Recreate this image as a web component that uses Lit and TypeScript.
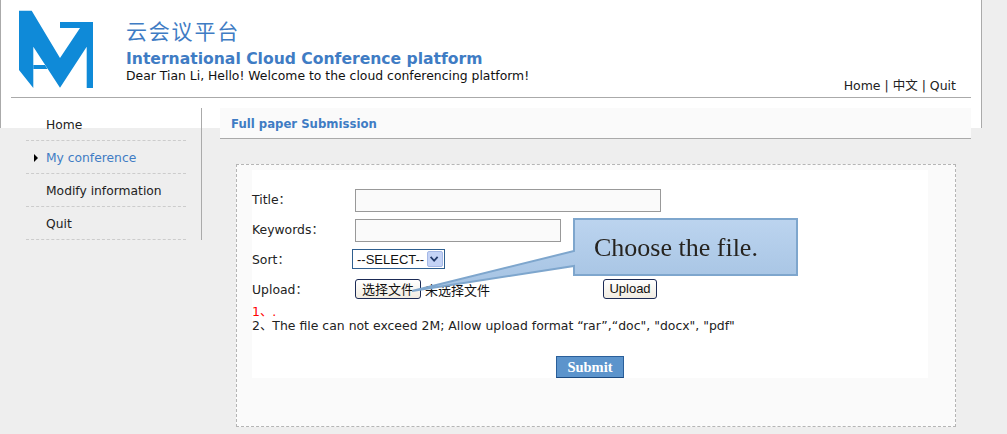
import { LitElement, html, css } from "lit";
import { customElement } from "lit/decorators.js";

@customElement("app-root")
export class AppRoot extends LitElement {
  static styles = css`
    :host {
      display: block;
      width: 1007px;
      height: 434px;
      overflow: hidden;
      background: #eeeeee;
      font-family: "DejaVu Sans", "Noto Sans CJK SC", sans-serif;
      font-size: 12.4px;
      color: #222;
      position: relative;
    }
    .top {
      box-sizing: border-box;
      width: 982px;
      height: 128px;
      background: #fff;
      border-left: 1px solid #aaa;
      border-right: 1px solid #aaa;
    }
    .head {
      box-sizing: border-box;
      margin-left: 10px;
      width: 960px;
      height: 98px;
      border-bottom: 1px solid #aaa;
      display: flex;
      padding-top: 10px;
    }
    .logo { width: 76px; height: 79px; flex: none; margin: 0 32px 0 7px; }
    .brand { flex: 1; padding-top: 7px; }
    .cn { font-family: "Noto Sans CJK SC", sans-serif; font-size: 21px; line-height: 26px; letter-spacing: 1.8px; color: #3f7cc4; margin-bottom: 6px; }
    .en { font-size: 15.6px; line-height: 20px; font-weight: 700; color: #3f7cc4; }
    .dear { font-size: 12.4px; line-height: 14px; color: #111; }
    .links { align-self: flex-end; padding: 0 15px 3px 0; font-size: 12.5px; line-height: 16px; color: #222; white-space: nowrap; }
    .main { display: flex; margin-top: -20px; }
    .side {
      box-sizing: border-box;
      width: 202px;
      height: 132px;
      padding-left: 26px;
      border-right: 1px solid #aaa;
      flex: none;
      margin-right: 18px;
    }
    .side ul { list-style: none; margin: 0; padding: 0; width: 160px; }
    .side li {
      box-sizing: border-box;
      height: 33px;
      line-height: 32px;
      padding: 1px 0 0 20px;
      border-bottom: 1px dashed #ccc;
      font-size: 12.3px;
      color: #222;
      position: relative;
    }
    .side li.on { color: #3f7cc4; }
    .side li.on::before {
      content: "";
      position: absolute;
      left: 8px;
      top: 13px;
      border-left: 4px solid #000;
      border-top: 4px solid transparent;
      border-bottom: 4px solid transparent;
    }
    .content { width: 751px; flex: none; }
    .bar {
      box-sizing: border-box;
      height: 31px;
      background: #fafafa;
      border-bottom: 1px solid #aaa;
      padding: 1px 0 0 11px;
      line-height: 30px;
      font-size: 11.7px;
      font-weight: 700;
      color: #3f7cc4;
    }
    .panel {
      box-sizing: border-box;
      margin: 25px 0 0 16px;
      width: 720px;
      height: 263px;
      border: 1px dashed #b5b5b5;
      background: #fafafa;
      padding: 5px 0 0 15px;
    }
    .form {
      box-sizing: border-box;
      width: 676px;
      height: 208px;
      background: #fff;
      padding-top: 15px;
      display: flex;
      flex-direction: column;
    }
    .row { display: flex; align-items: center; height: 30px; flex: none; color: #222; }
    .lab { width: 103px; flex: none; margin-bottom: 2px; }
    .inp { box-sizing: border-box; height: 23px; background: #fafafa; border: 1px solid #999; }
    .w1 { width: 306px; }
    .w2 { width: 206px; }
    .sel {
      box-sizing: border-box;
      margin: 0 0 2px -3px;
      width: 93px;
      height: 20px;
      border: 1px solid #2f5f8f;
      background: #fff;
      display: flex;
      align-items: center;
      justify-content: space-between;
      padding: 0 1px 0 4px;
      font-family: "Liberation Sans", sans-serif;
      font-size: 13px;
      color: #111;
    }
    .arrow { width: 16px; height: 16px; box-sizing: border-box; background: #c4d3f6; border: 1px solid #a5b8e6; border-radius: 2px; display: block; }
    .btn {
      box-sizing: border-box;
      height: 20px;
      margin-bottom: 2px;
      border: 1px solid #1b2a55;
      border-radius: 3px;
      background: linear-gradient(#fff, #f1ece2);
      font-family: "Noto Sans CJK SC", "Liberation Sans", sans-serif;
      font-size: 13px;
      line-height: 18px;
      color: #111;
      text-align: center;
      flex: none;
    }
    .choose { width: 66px; }
    .none { width: 182px; margin-bottom: 2px; padding-left: 4px; box-sizing: border-box; font-family: "Noto Sans CJK SC", sans-serif; font-size: 13px; color: #111; flex: none; }
    .upload { width: 54px; font-family: "Liberation Sans", sans-serif; }
    .notes { font-size: 12.45px; line-height: 14px; color: #222; }
    .red { color: #f00; }
    .actions { display: flex; justify-content: center; margin-top: auto; }
    .submit {
      box-sizing: border-box;
      width: 68px;
      height: 22px;
      background: #5c94cc;
      border: 1px solid #2a5f9a;
      border-bottom-color: #1c4a80;
      color: #fff;
      font-family: "Liberation Serif", serif;
      font-weight: 700;
      font-size: 14.5px;
      line-height: 20px;
      text-align: center;
    }
    .callout { position: absolute; left: 400px; top: 212px; width: 404px; height: 88px; overflow: visible; filter: blur(0.5px); }
    .ctext {
      position: absolute;
      left: 594px;
      top: 233px;
      font-family: "Liberation Serif", serif;
      font-size: 26px;
      line-height: 30px;
      color: #26231f;
      white-space: nowrap;
      filter: blur(0.3px);
    }
  `;

  render() {
    return html`
      <div class="top">
        <div class="head">
          <svg class="logo" viewBox="18 10 76 79">
            <polygon fill="#0f8ad8" points="19,10.7 31.7,10.7 60,58 80,28 60,28 60,22 93,22 93,88 86.7,88 86.7,46.7 60,87.7 33.3,46.7 33.3,88 19,70" />
            <polygon fill="#0f8ad8" points="33.3,65 45,65 47.5,69 33.3,69" />
          </svg>
          <div class="brand">
            <div class="cn">云会议平台</div>
            <div class="en">International Cloud Conference platform</div>
            <div class="dear">Dear Tian Li, Hello! Welcome to the cloud conferencing platform!</div>
          </div>
          <div class="links">Home | 中文 | Quit</div>
        </div>
      </div>
      <div class="main">
        <nav class="side">
          <ul>
            <li>Home</li>
            <li class="on">My conference</li>
            <li>Modify information</li>
            <li>Quit</li>
          </ul>
        </nav>
        <div class="content">
          <div class="bar">Full paper Submission</div>
          <div class="panel">
            <div class="form">
              <div class="row"><span class="lab">Title：</span><div class="inp w1"></div></div>
              <div class="row"><span class="lab">Keywords：</span><div class="inp w2"></div></div>
              <div class="row"><span class="lab">Sort：</span>
                <div class="sel">--SELECT--
                  <svg class="arrow" viewBox="0 0 16 16"><path d="M3 5.5l4 4.5 4-4.5" fill="none" stroke="#223a6a" stroke-width="2"/></svg>
                </div>
              </div>
              <div class="row"><span class="lab">Upload：</span>
                <div class="btn choose">选择文件</div>
                <div class="none">未选择文件</div>
                <div class="btn upload">Upload</div>
              </div>
              <div class="notes">
                <div class="red">1、.</div>
                <div>2、The file can not exceed 2M; Allow upload format “rar”,“doc", "docx", "pdf"</div>
              </div>
              <div class="actions"><div class="submit">Submit</div></div>
            </div>
          </div>
        </div>
      </div>
      <svg class="callout" viewBox="400 212 404 88">
        <defs>
          <linearGradient id="cg" x1="0" y1="0" x2="0" y2="1">
            <stop offset="0" stop-color="#bcd4ef" />
            <stop offset="1" stop-color="#a4c2e2" />
          </linearGradient>
        </defs>
        <path d="M574 219H797V275H574V266L412 291L574 251Z" fill="url(#cg)" stroke="#7ea6cd" stroke-width="2" />
      </svg>
      <div class="ctext">Choose the file.</div>
    `;
  }
}
